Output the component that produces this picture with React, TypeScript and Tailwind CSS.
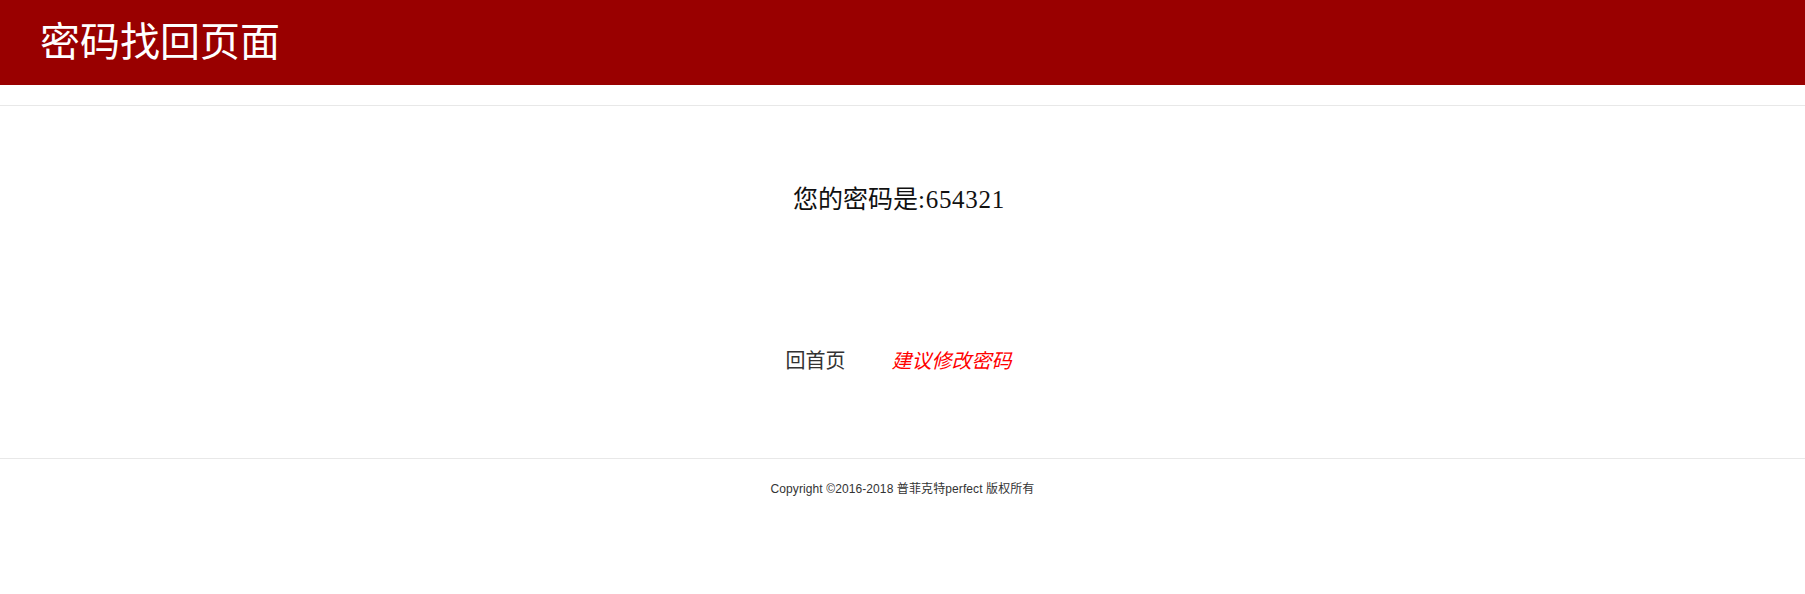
import React from "react";

const serif = '"Liberation Serif", "Noto Sans CJK SC", serif';
const sans = '"Liberation Sans", Arial, "Noto Sans CJK SC", sans-serif';

export default function App() {
  return (
    <div className="w-full min-h-[594px] bg-white" style={{ fontFamily: serif }}>
      <header className="h-[85px] bg-[#990000] flex items-center pl-[40px]">
        <h1 className="text-[40px] leading-[40px] text-white font-normal">密码找回页面</h1>
      </header>
      <div className="mt-[20px] border-t border-[#e8e8e8]">
        <div className="pt-[82px] pr-[7px] flex justify-center">
          <p className="text-[25px] leading-[24px] text-[#111]">
            您的密码是<span className="tracking-[0.7px]">:654321</span>
          </p>
        </div>
        <div className="pt-[139px] pb-[87px] pr-[8px] flex justify-center items-center gap-[46px] text-[20px] leading-[20px]">
          <a href="#" className="text-[#333]">回首页</a>
          <a href="#" className="text-[#ff0000] italic">建议修改密码</a>
        </div>
      </div>
      <footer className="border-t border-[#e8e8e8] pt-[22px] flex justify-center">
        <p className="text-[12px] leading-[16px] text-[#333] tracking-[0.1px]" style={{ fontFamily: sans }}>
          Copyright ©2016-2018 普菲克特perfect 版权所有
        </p>
      </footer>
    </div>
  );
}
